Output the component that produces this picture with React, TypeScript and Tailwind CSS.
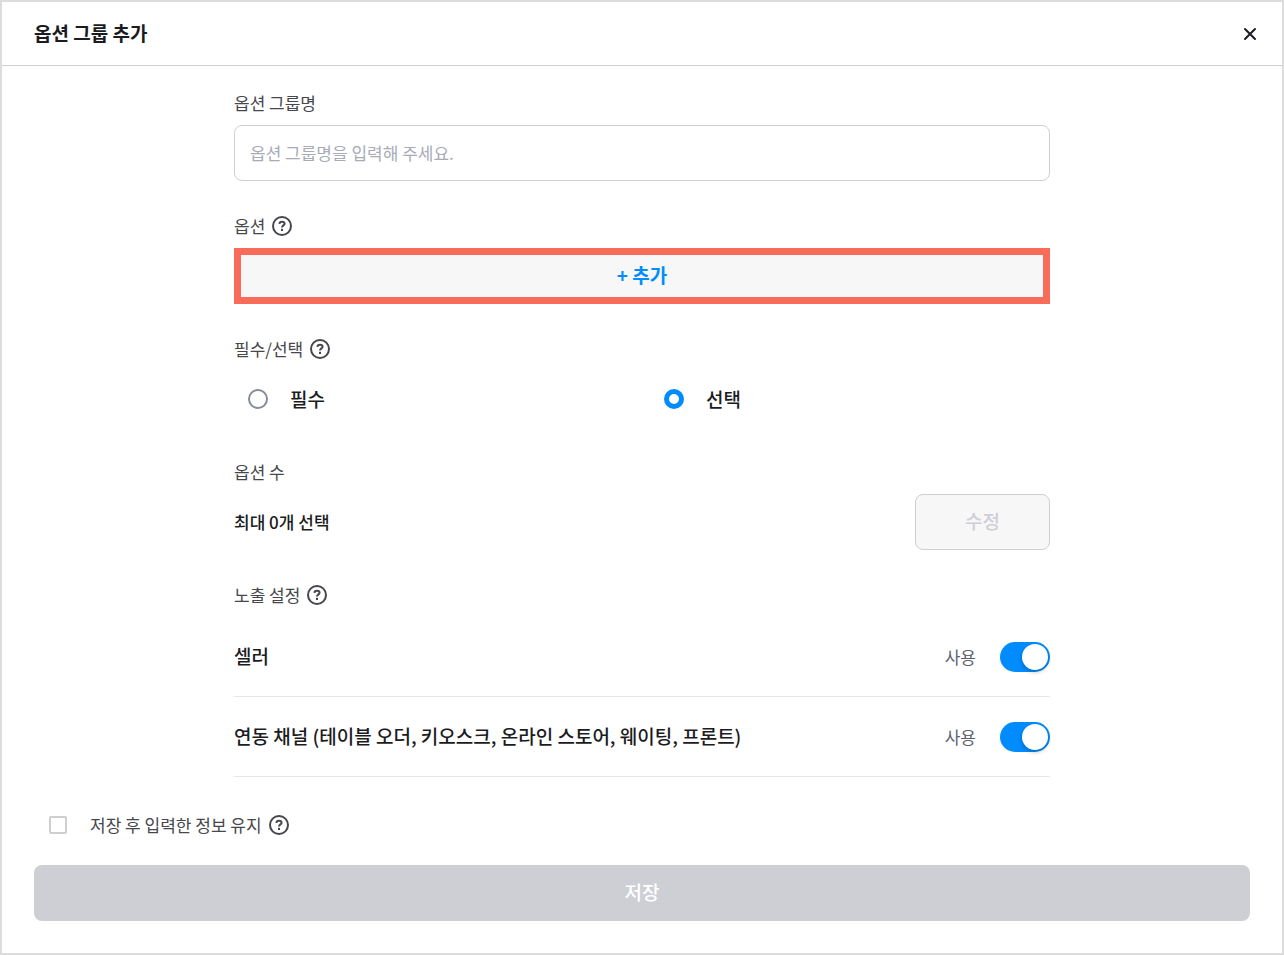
import { useState, type ReactNode } from "react"

function HelpIcon() {
    return (
        <svg width="20" height="20" viewBox="0 0 20 20" fill="none" stroke="currentColor" strokeWidth="2" aria-hidden="true">
            <circle cx="10" cy="10" r="9" />
            <path d="M7.4 7.9C7.5 6.5 8.5 5.7 10 5.7C11.5 5.7 12.6 6.5 12.6 7.8C12.6 9.4 10 9.5 10 11.6" />
            <rect x="9" y="12.8" width="2" height="2.2" fill="currentColor" stroke="none" />
        </svg>
    )
}

function Help({ label }: { label: string }) {
    return (
        <button type="button" aria-label={label} className="ml-[7px] rounded-full text-[#46474c]">
            <HelpIcon />
        </button>
    )
}

function Section({ title, htmlFor, help, children }: { title: string; htmlFor?: string; help?: boolean; children: ReactNode }) {
    return (
        <section>
            <div className="mb-[9px] flex h-[26px] items-center text-[17px] leading-6 text-[#46474c]">
                {htmlFor ? <label htmlFor={htmlFor}>{title}</label> : <h2>{title}</h2>}
                {help && <Help label={title + " 도움말"} />}
            </div>
            {children}
        </section>
    )
}

function Radio({ label, checked, onChange }: { label: string; checked: boolean; onChange: () => void }) {
    return (
        <label className="flex h-14 items-center text-[19px] leading-6 font-medium text-[#1b1c22]">
            <input
                type="radio"
                name="required"
                checked={checked}
                onChange={onChange}
                className="mr-[22px] ml-3.5 size-5 appearance-none rounded-full border-2 border-[#858b9b] bg-white checked:border-5 checked:border-[#008cff]"
            />
            {label}
        </label>
    )
}

function ToggleRow({ label }: { label: string }) {
    const [on, setOn] = useState(true)

    return (
        <div className="flex h-20 items-center justify-between border-b border-[#e6e6e8]">
            <span className="text-[19px] font-medium text-[#1b1c22]">{label}</span>
            <div className="flex items-center gap-6">
                <span className="text-[17px] leading-6 text-[#5c6170]">{on ? "사용" : "미사용"}</span>
                <button
                    type="button"
                    role="switch"
                    aria-checked={on}
                    aria-label={label}
                    onClick={() => setOn(!on)}
                    className={"flex h-[30px] w-[50px] items-center rounded-full p-0.5 " + (on ? "justify-end bg-[#008cff]" : "justify-start bg-[#cecfd5]")}
                >
                    <span className="size-[26px] rounded-full bg-white shadow-[0_2px_4px_rgba(0,0,0,0.25)]"></span>
                </button>
            </div>
        </div>
    )
}

export default function App() {
    const [name, setName] = useState("")
    const [required, setRequired] = useState(false)
    const [keep, setKeep] = useState(false)

    return (
        <div className="flex min-h-screen flex-col border-2 border-[#dcdcdc] bg-white font-['Noto_Sans_CJK_KR',sans-serif]">
            <header className="flex h-16 items-center justify-between border-b border-[#cecfd1] px-8">
                <h1 className="text-[19px] font-bold text-[#1b1c22]">옵션 그룹 추가</h1>
                <button type="button" aria-label="닫기" className="-mr-4 flex size-8 items-center justify-center text-[#1b1c22]">
                    <svg width="14" height="14" viewBox="0 0 14 14" fill="none" stroke="currentColor" strokeWidth="2" strokeLinecap="round" aria-hidden="true">
                        <path d="M2 2L12 12M12 2L2 12" />
                    </svg>
                </button>
            </header>

            <main className="mx-auto flex w-full max-w-[816px] grow flex-col gap-8 pt-6">
                <Section title="옵션 그룹명" htmlFor="group-name">
                    <input
                        id="group-name"
                        type="text"
                        value={name}
                        onChange={(e) => setName(e.target.value)}
                        placeholder="옵션 그룹명을 입력해 주세요."
                        className="block h-14 w-full rounded-lg border border-[#cecfd1] px-[15px] pb-0.5 text-[17px] text-[#1b1c22] placeholder:text-[#a7abb8]"
                    />
                </Section>

                <Section title="옵션" help>
                    <button type="button" className="block h-14 w-full border-[7px] border-[#fa6c5a] bg-[#f7f7f7] pb-0.5 text-[19px] leading-6 font-bold text-[#008cff]">
                        + 추가
                    </button>
                </Section>

                <Section title="필수/선택" help>
                    <div className="grid grid-cols-2 gap-4">
                        <Radio label="필수" checked={required} onChange={() => setRequired(true)} />
                        <Radio label="선택" checked={!required} onChange={() => setRequired(false)} />
                    </div>
                </Section>

                <Section title="옵션 수">
                    <div className="flex items-center justify-between">
                        <span className="text-[17px] font-medium text-[#1b1c22]">최대 0개 선택</span>
                        <button type="button" disabled className="h-14 w-[135px] rounded-lg border border-[#cecfd5] bg-[#f7f7f7] pb-0.5 text-[19px] leading-6 font-medium text-[#cecfd5]">
                            수정
                        </button>
                    </div>
                </Section>

                <Section title="노출 설정" help>
                    <ToggleRow label="셀러" />
                    <ToggleRow label="연동 채널 (테이블 오더, 키오스크, 온라인 스토어, 웨이팅, 프론트)" />
                </Section>
            </main>

            <footer className="px-8 pt-6 pb-8">
                <div className="mb-4 flex h-12 items-center text-[17px] text-[#46474c]">
                    <label className="flex items-center">
                        <input
                            type="checkbox"
                            checked={keep}
                            onChange={(e) => setKeep(e.target.checked)}
                            className="mr-[23px] ml-[15px] size-[18px] appearance-none rounded-xs border-2 border-[#cecfd1] bg-white checked:border-[#008cff] checked:bg-[#008cff]"
                        />
                        저장 후 입력한 정보 유지
                    </label>
                    <Help label="정보 유지 도움말" />
                </div>
                <button type="button" disabled className="block h-14 w-full rounded-lg bg-[#cecfd5] pb-0.5 text-[19px] leading-6 font-medium text-white">
                    저장
                </button>
            </footer>
        </div>
    )
}
